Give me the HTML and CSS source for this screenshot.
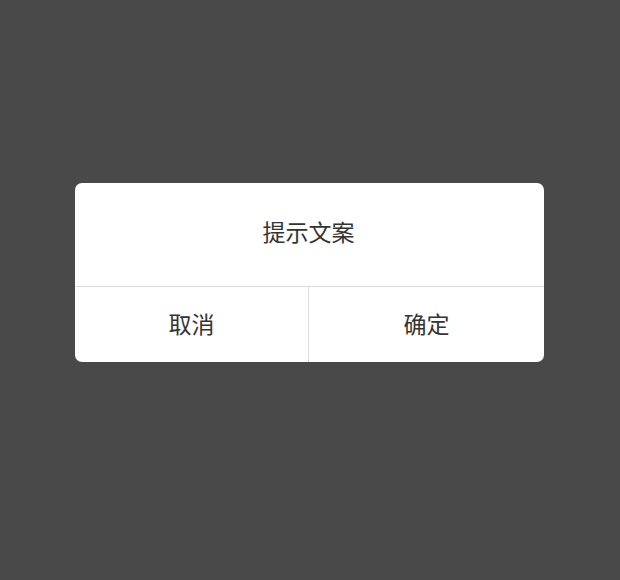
FILE: index.html
```html
<!DOCTYPE html>
<html lang="zh-CN">
<head>
<meta charset="utf-8">
<link rel="stylesheet" href="styles.css">
</head>
<body>
<div class="screen">
  <div class="dialog">
    <div class="dialog-body">提示文案</div>
    <div class="dialog-actions">
      <div class="btn btn-cancel">取消</div>
      <div class="btn btn-ok">确定</div>
    </div>
  </div>
</div>
</body>
</html>
```
FILE: styles.css
```css
html, body {
  margin: 0;
  padding: 0;
}
body {
  background: #494949;
  font-family: "Noto Sans CJK SC", "Noto Sans", sans-serif;
  color: #333333;
}
.screen {
  width: 620px;
  height: 580px;
  box-sizing: border-box;
  padding: 183px 0 0 75px;
  display: flex;
  flex-direction: column;
  align-items: flex-start;
}
.dialog {
  width: 469px;
  background: #ffffff;
  border-radius: 7px;
  overflow: hidden;
}
.dialog-body {
  height: 104px;
  box-sizing: border-box;
  padding: 0 2px 6px 0;
  display: flex;
  align-items: center;
  justify-content: center;
  font-size: 23px;
  line-height: 1;
  border-bottom: 1px solid #dcdcdc;
}
.dialog-actions {
  display: flex;
  height: 75px;
}
.btn {
  display: flex;
  align-items: center;
  justify-content: center;
  box-sizing: border-box;
  padding-bottom: 2px;
  font-size: 23px;
  line-height: 1;
}
.btn-cancel {
  width: 233px;
}
.btn-ok {
  flex: 1;
  border-left: 1px solid #dcdcdc;
}
```
